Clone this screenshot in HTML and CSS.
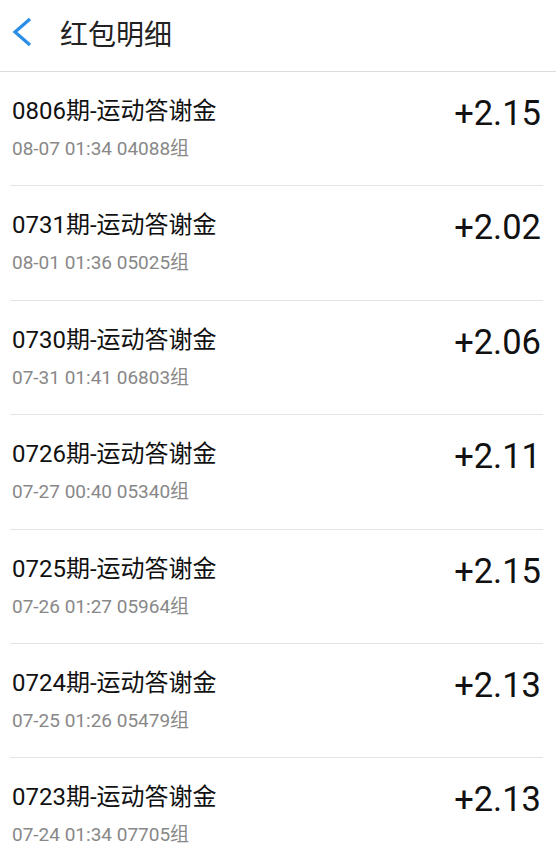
FILE: index.html
```html
<!DOCTYPE html>
<html>
<head>
    <title>红包明细</title>
    <link rel="stylesheet" href="styles.css">
</head>
<body>
    <div class="header">
        <svg class="back" width="22" height="30" viewBox="0 0 22 30">
            <polyline points="19,2 4,15 19,28" fill="none" stroke="#2a8ee6" stroke-width="3.2" stroke-linecap="butt" stroke-linejoin="miter"/>
        </svg>
        <span class="title">红包明细</span>
    </div>
    <div class="list">
        <div class="row">
            <div class="info">
                <div class="name">0806期-运动答谢金</div>
                <div class="meta">08-07 01:34 04088组</div>
            </div>
            <div class="amount">+2.15</div>
        </div>
        <div class="row">
            <div class="info">
                <div class="name">0731期-运动答谢金</div>
                <div class="meta">08-01 01:36 05025组</div>
            </div>
            <div class="amount">+2.02</div>
        </div>
        <div class="row">
            <div class="info">
                <div class="name">0730期-运动答谢金</div>
                <div class="meta">07-31 01:41 06803组</div>
            </div>
            <div class="amount">+2.06</div>
        </div>
        <div class="row">
            <div class="info">
                <div class="name">0726期-运动答谢金</div>
                <div class="meta">07-27 00:40 05340组</div>
            </div>
            <div class="amount">+2.11</div>
        </div>
        <div class="row">
            <div class="info">
                <div class="name">0725期-运动答谢金</div>
                <div class="meta">07-26 01:27 05964组</div>
            </div>
            <div class="amount">+2.15</div>
        </div>
        <div class="row">
            <div class="info">
                <div class="name">0724期-运动答谢金</div>
                <div class="meta">07-25 01:26 05479组</div>
            </div>
            <div class="amount">+2.13</div>
        </div>
        <div class="row">
            <div class="info">
                <div class="name">0723期-运动答谢金</div>
                <div class="meta">07-24 01:34 07705组</div>
            </div>
            <div class="amount">+2.13</div>
        </div>
    </div>
</body>
</html>
```

FILE: styles.css
```css
body {
    margin: 0;
    font-family: Roboto, "Noto Sans CJK SC", sans-serif;
    background-color: #fff;
    color: #111;
    overflow: hidden;
}
.header {
    display: flex;
    align-items: center;
    height: 71px;
    border-bottom: 1px solid #dcdcdc;
}
.back {
    display: block;
    margin: 0 0 7px 11px;
}
.title {
    margin-left: 27px;
    font-size: 28px;
    color: #222;
    line-height: 71px;
}
.row {
    display: flex;
    justify-content: space-between;
    align-items: flex-start;
    height: 113.4px;
    margin: 0 13px 0 10px;
    border-bottom: 1px solid #e4e4e4;
}
.info {
    padding: 24px 0 0 2px;
}
.name {
    font-size: 24px;
    line-height: 30px;
}
.meta {
    margin-top: 11px;
    font-size: 19px;
    line-height: 24px;
    color: #888;
}
.amount {
    padding: 21px 2px 0 0;
    font-size: 34.5px;
    line-height: 40px;
}
```
